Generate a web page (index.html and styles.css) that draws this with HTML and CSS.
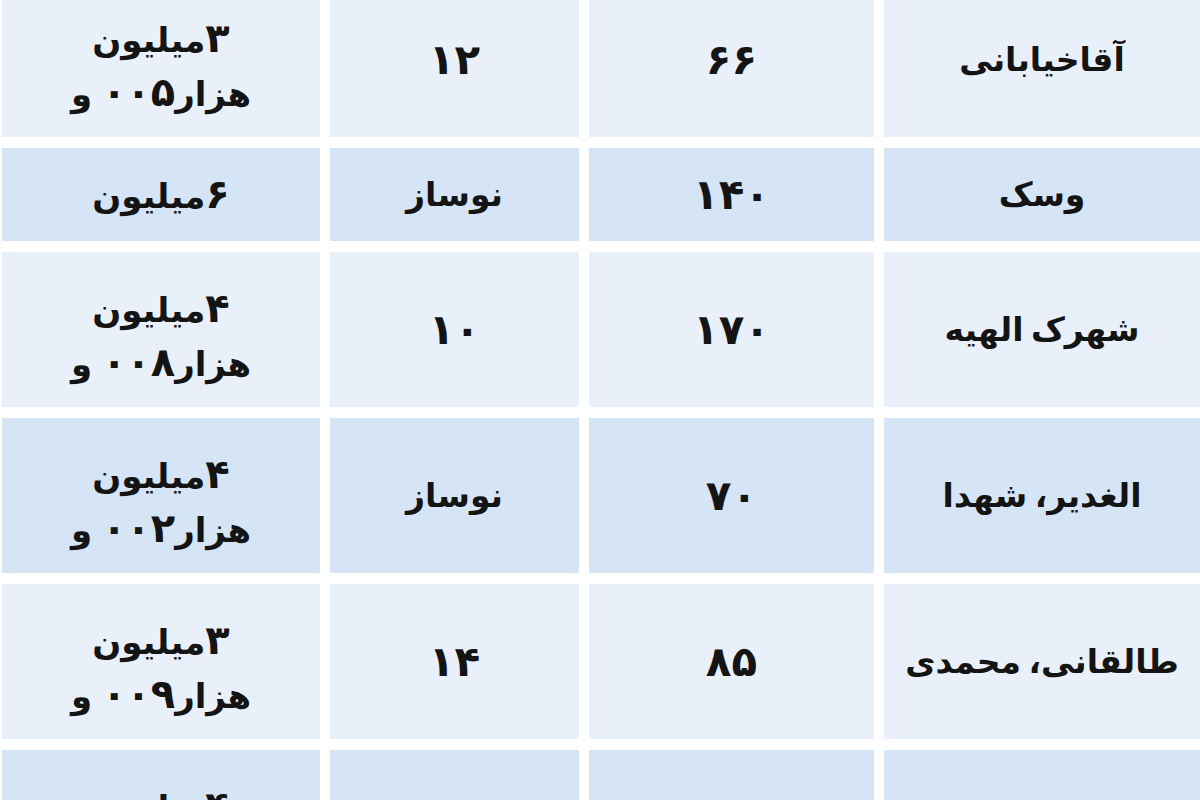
FILE: index.html
```html
<!DOCTYPE html>
<html lang="fa">
<head>
<meta charset="utf-8">
<title>جدول قیمت</title>
<link rel="stylesheet" href="styles.css">
</head>
<body>
<div class="table" dir="rtl">
  <div class="row tall light">
    <div class="cell c-area">آقاخیابانی</div>
    <div class="cell c-num">۶۶</div>
    <div class="cell c-num">۱۲</div>
    <div class="cell c-price"><span class="ln"><span class="d">۳</span>میلیون</span><span class="ln">هزار<span class="d">۰۰۵</span> و</span></div>
  </div>
  <div class="row short blue">
    <div class="cell c-area">وسک</div>
    <div class="cell c-num">۱۴۰</div>
    <div class="cell c-area">نوساز</div>
    <div class="cell c-price single"><span class="ln"><span class="d">۶</span>میلیون</span></div>
  </div>
  <div class="row tall light">
    <div class="cell c-area">شهرک الهیه</div>
    <div class="cell c-num">۱۷۰</div>
    <div class="cell c-num">۱۰</div>
    <div class="cell c-price"><span class="ln"><span class="d">۴</span>میلیون</span><span class="ln">هزار<span class="d">۰۰۸</span> و</span></div>
  </div>
  <div class="row tall blue">
    <div class="cell c-area">الغدیر، شهدا</div>
    <div class="cell c-num">۷۰</div>
    <div class="cell c-area">نوساز</div>
    <div class="cell c-price"><span class="ln"><span class="d">۴</span>میلیون</span><span class="ln">هزار<span class="d">۰۰۲</span> و</span></div>
  </div>
  <div class="row tall light">
    <div class="cell c-area">طالقانی، محمدی</div>
    <div class="cell c-num">۸۵</div>
    <div class="cell c-num">۱۴</div>
    <div class="cell c-price"><span class="ln"><span class="d">۳</span>میلیون</span><span class="ln">هزار<span class="d">۰۰۹</span> و</span></div>
  </div>
  <div class="row tall blue">
    <div class="cell c-area"></div>
    <div class="cell c-num"></div>
    <div class="cell c-num"></div>
    <div class="cell c-price"><span class="ln"><span class="d">۴</span>میلیون</span><span class="ln">هزار<span class="d">۰۰۵</span> و</span></div>
  </div>
</div>
</body>
</html>
```
FILE: styles.css
```css
html, body {
  margin: 0;
  padding: 0;
  background: #ffffff;
  overflow: hidden;
}

body {
  width: 1200px;
  height: 800px;
  font-family: "DejaVu Sans", sans-serif;
  font-weight: bold;
  color: #141414;
}

.table {
  display: flex;
  flex-direction: column;
  gap: 11px;
  margin-top: -18px;
  padding-left: 2px;
}

.row {
  display: grid;
  grid-template-columns: 316px 285px 249px 1fr;
  column-gap: 10px;
}

.row.tall { height: 155px; }
.row.short { height: 93px; }

.cell {
  display: flex;
  flex-direction: column;
  align-items: center;
  justify-content: center;
  text-align: center;
  white-space: nowrap;
  box-sizing: border-box;
}

.c-area {
  font-size: 33px;
  word-spacing: -4px;
}

.c-num {
  font-size: 42px;
}

.c-price {
  font-size: 34px;
  line-height: 52px;
  padding-top: 12px;
  word-spacing: -2px;
}

.c-price.single {
  padding-top: 0;
}

.c-price .ln {
  display: block;
}

.c-price .d {
  font-size: 40px;
}

.light .cell { background: #e9f0f9; }
.blue .cell { background: #d5e5f6; }
```
